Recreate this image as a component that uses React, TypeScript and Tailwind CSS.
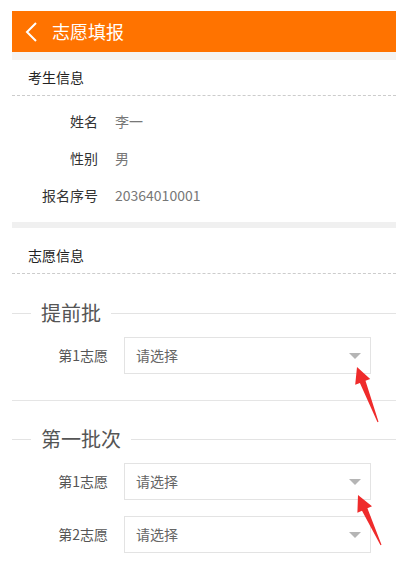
import React from "react";

const font = { fontFamily: '"Noto Sans CJK SC", "Noto Sans", sans-serif' };

const InfoRow = ({ label, value }: { label: string; value: string }) => (
  <div className="flex h-[37px] items-center text-[14px]">
    <div className="w-[86px] text-right text-[#333]">{label}</div>
    <div className="ml-[17px] text-[#777]">{value}</div>
  </div>
);

const Select = ({ label }: { label: string }) => (
  <div className="flex items-center">
    <div className="w-[96px] text-right text-[14px] text-[#555]">{label}</div>
    <div className="ml-4 flex h-[37px] w-[247px] items-center justify-between border border-[#e3e3e3] pl-[11px] pr-[9px]">
      <span className="text-[14px] text-[#666]">请选择</span>
      <svg width="12" height="6" viewBox="0 0 12 6">
        <polygon points="0,0 12,0 6,6" fill="#b5b5b5" />
      </svg>
    </div>
  </div>
);

const BatchTitle = ({ title }: { title: string }) => (
  <div className="flex h-[30px] items-center">
    <div className="h-px w-[19px] bg-[#e3e3e3]" />
    <div className="mx-[10px] text-[20px] leading-[30px] text-[#555]">{title}</div>
    <div className="h-px flex-1 bg-[#e3e3e3]" />
  </div>
);

export default function App() {
  return (
    <div className="relative min-h-[566px] overflow-hidden bg-white" style={font}>
      <div className="ml-3 mr-px pt-[11px]">
        <div className="flex h-[41px] items-center bg-[#ff7300]">
          <svg className="ml-[13px]" width="12" height="20" viewBox="0 0 12 20">
            <polyline points="11,1 2,10 11,19" fill="none" stroke="#fff" strokeWidth="2" />
          </svg>
          <span className="ml-[15px] text-[18px] text-white">志愿填报</span>
        </div>
        <div className="h-2 bg-[#f5f3f1]" />
        <div className="flex h-9 items-center border-b border-dashed border-[#ccc] pl-4 text-[14px] text-[#222]">
          考生信息
        </div>
        <div className="pb-[8px] pt-[7px]">
          <InfoRow label="姓名" value="李一" />
          <InfoRow label="性别" value="男" />
          <InfoRow label="报名序号" value="20364010001" />
        </div>
        <div className="h-[6px] bg-[#f0f0f0]" />
        <div className="flex h-[46px] items-end border-b border-dashed border-[#ccc] pb-[9px] pl-4 text-[14px] leading-[17px] text-[#222]">
          志愿信息
        </div>

        <div className="mt-[24px]">
          <BatchTitle title="提前批" />
        </div>
        <div className="mt-[9px]">
          <Select label="第1志愿" />
        </div>
        <div className="mt-[26px] h-px bg-[#e5e5e5]" />

        <div className="mt-[23px]">
          <BatchTitle title="第一批次" />
        </div>
        <div className="mt-[9px]">
          <Select label="第1志愿" />
        </div>
        <div className="mt-[16px]">
          <Select label="第2志愿" />
        </div>
      </div>

      {/* annotation arrows */}
      <svg
        className="pointer-events-none absolute left-0 top-0"
        width="397"
        height="566"
        viewBox="0 0 397 566"
      >
        <polygon
          points="357,367 370.2,379 365.5,380.8 378.5,421.8 377.5,422.2 359.9,383 355.2,384.7"
          fill="#ef2b2b"
        />
        <polygon
          points="358,495 372,506.2 367.4,508.2 381.5,544.8 380.5,545.2 362,510.8 357.4,512.8"
          fill="#ef2b2b"
        />
      </svg>
    </div>
  );
}
